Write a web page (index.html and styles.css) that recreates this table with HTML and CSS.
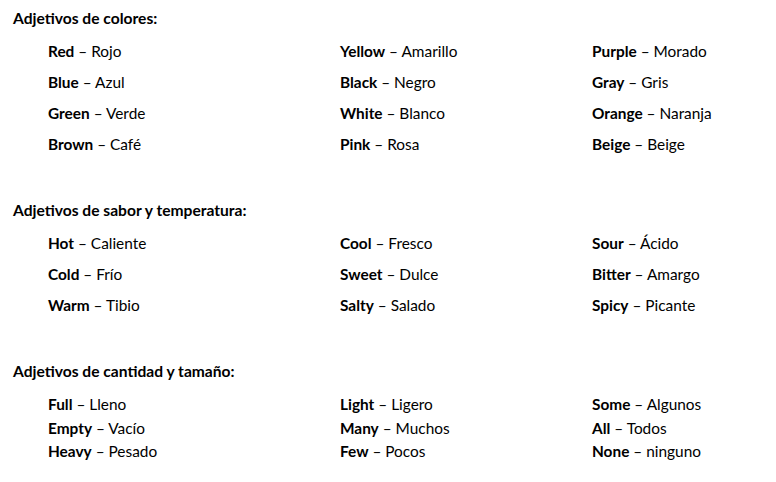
FILE: index.html
```html
<!DOCTYPE html>
<html lang="es">
<head>
<meta charset="utf-8">
<link rel="stylesheet" href="styles.css">
</head>
<body>
<section class="sec sec-colors">
  <h2 class="title">Adjetivos de colores:</h2>
  <div class="grid">
    <div class="item"><b>Red</b> – Rojo</div>
    <div class="item"><b>Yellow</b> – Amarillo</div>
    <div class="item"><b>Purple</b> – Morado</div>
    <div class="item"><b>Blue</b> – Azul</div>
    <div class="item"><b>Black</b> – Negro</div>
    <div class="item"><b>Gray</b> – Gris</div>
    <div class="item"><b>Green</b> – Verde</div>
    <div class="item"><b>White</b> – Blanco</div>
    <div class="item"><b>Orange</b> – Naranja</div>
    <div class="item"><b>Brown</b> – Café</div>
    <div class="item"><b>Pink</b> – Rosa</div>
    <div class="item"><b>Beige</b> – Beige</div>
  </div>
</section>
<section class="sec sec-taste">
  <h2 class="title">Adjetivos de sabor y temperatura:</h2>
  <div class="grid">
    <div class="item"><b>Hot</b> – Caliente</div>
    <div class="item"><b>Cool</b> – Fresco</div>
    <div class="item"><b>Sour</b> – Ácido</div>
    <div class="item"><b>Cold</b> – Frío</div>
    <div class="item"><b>Sweet</b> – Dulce</div>
    <div class="item"><b>Bitter</b> – Amargo</div>
    <div class="item"><b>Warm</b> – Tibio</div>
    <div class="item"><b>Salty</b> – Salado</div>
    <div class="item"><b>Spicy</b> – Picante</div>
  </div>
</section>
<section class="sec sec-qty">
  <h2 class="title">Adjetivos de cantidad y tamaño:</h2>
  <div class="grid tight">
    <div class="item"><b>Full</b> – Lleno</div>
    <div class="item"><b>Light</b> – Ligero</div>
    <div class="item"><b>Some</b> – Algunos</div>
    <div class="item"><b>Empty</b> – Vacío</div>
    <div class="item"><b>Many</b> – Muchos</div>
    <div class="item"><b>All</b> – Todos</div>
    <div class="item"><b>Heavy</b> – Pesado</div>
    <div class="item"><b>Few</b> – Pocos</div>
    <div class="item"><b>None</b> – ninguno</div>
  </div>
</section>
</body>
</html>
```
FILE: styles.css
```css
html, body {
  margin: 0;
  padding: 0;
  background: #fff;
}
body {
  width: 776px;
  height: 482px;
  overflow: hidden;
  font-family: "Lato", "Open Sans", sans-serif;
  color: #000;
  padding: 9px 0 0 13px;
  box-sizing: border-box;
}
.sec { margin: 0; }
.title {
  margin: 0;
  font-size: 15.6px;
  font-weight: bold;
  line-height: 18px;
}
.grid {
  display: grid;
  grid-template-columns: 292px 252px 1fr;
  margin-left: 35px;
  margin-top: 15px;
  row-gap: 13px;
}
.item {
  font-size: 15.4px;
  line-height: 18px;
  white-space: nowrap;
}
.item b { font-weight: bold; }
.sec-taste { margin-top: 48px; }
.sec-qty { margin-top: 48px; }
.grid.tight { row-gap: 5.5px; }
```
